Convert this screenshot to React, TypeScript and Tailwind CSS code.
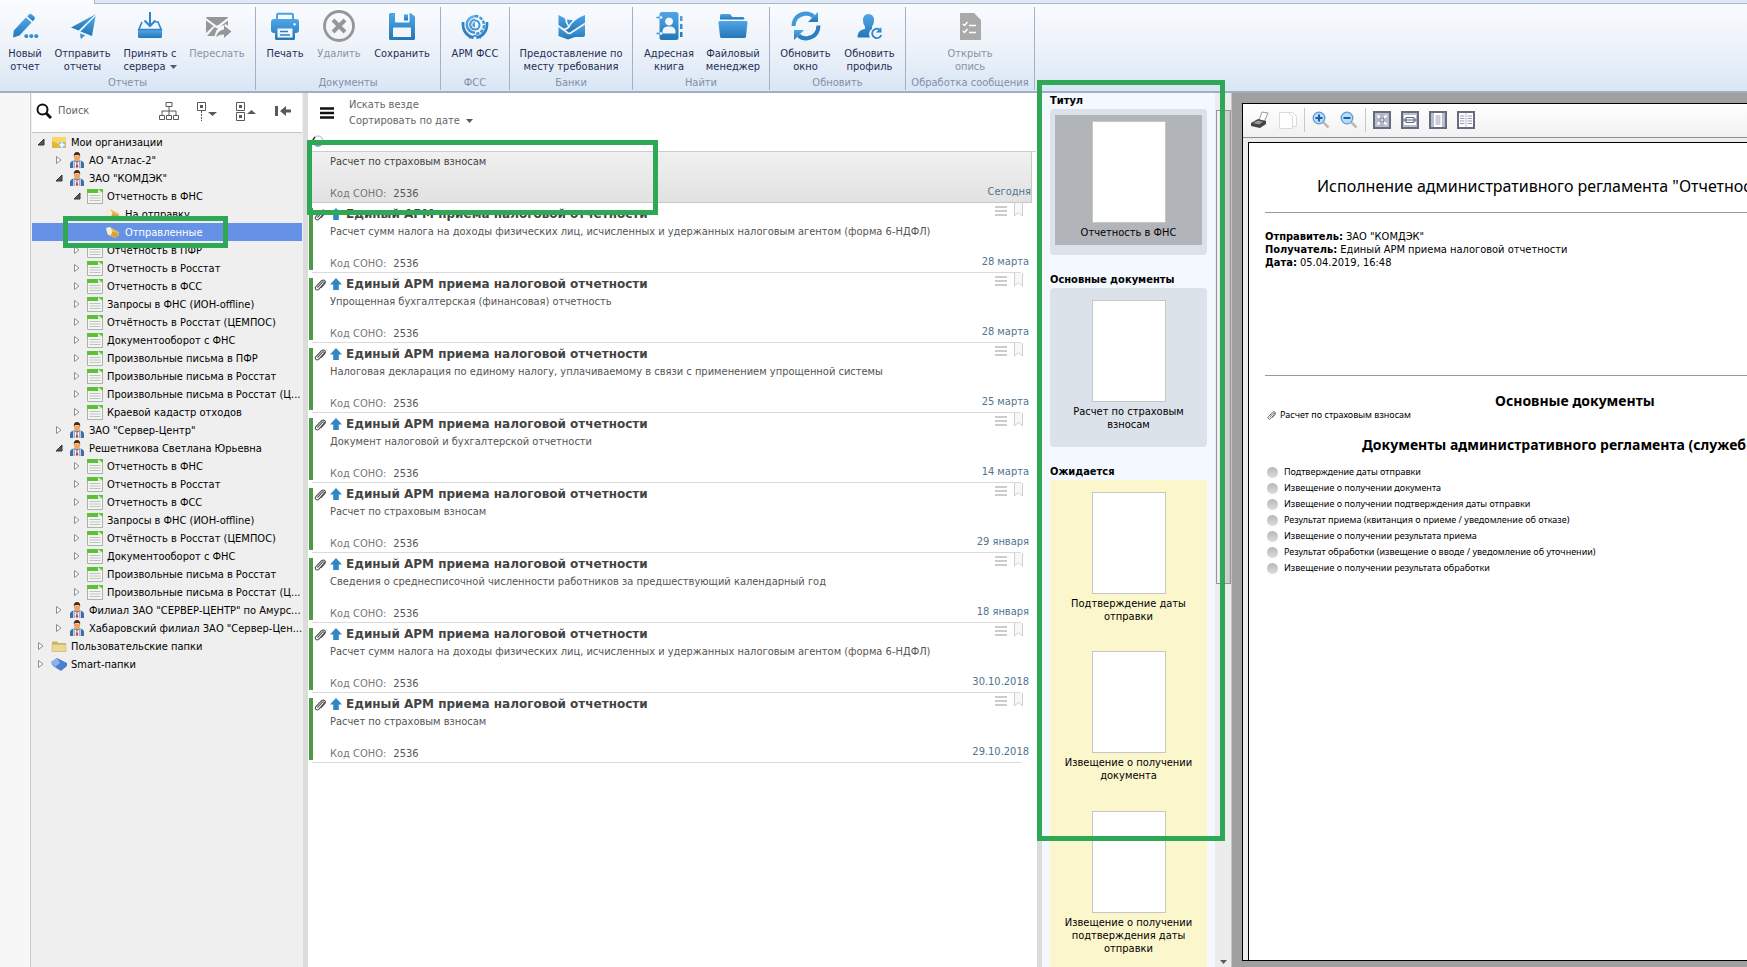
import type { ReactNode } from 'react'

/* ---------- ribbon icons (32x32) ---------- */

function RibbonSvg({ children, gray = false }: { children: ReactNode; gray?: boolean }) {
  return (
    <svg viewBox="0 0 32 32" className="w-8 h-8" fill={gray ? '#969696' : 'url(#ribbonBlue)'} aria-hidden="true">
      {children}
    </svg>
  )
}

const icons = {
  pencil: (
    <RibbonSvg>
      <path d="M4 27.5 4.8 20.5 17 7.5 22.5 12.5 10.5 25.5Z" />
      <path d="M18.2 6.2 20 4.4q1.4-1.1 2.8 0l2.6 2.4q1.2 1.3 0 2.7l-1.7 1.8Z" />
      <circle cx="17.3" cy="26" r="2.1" />
      <circle cx="22.3" cy="26" r="2.1" />
      <circle cx="27.3" cy="26" r="2.1" />
    </RibbonSvg>
  ),
  plane: (
    <RibbonSvg>
      <path d="M29 4 4 17.5l7.6 3Z" />
      <path d="M28.6 6 13.4 21.4 25 26Z" />
      <path d="M13 23.2 13.8 29l4.4-3.8Z" />
    </RibbonSvg>
  ),
  inbox: (
    <RibbonSvg>
      <path d="M4 20h24v6.5q0 1.5-1.500 1.500h-21Q4 28 4 26.500Z" />
      <path d="M8 12 4.800 19.500H27.200L24 12h-2.500" fill="none" stroke="#2b86cb" strokeWidth="1.600" />
      <path d="M16 2v14M10.500 10.500 16 16l5.500-5.500" fill="none" stroke="#2b86cb" strokeWidth="2" />
    </RibbonSvg>
  ),
  forward: (
    <RibbonSvg gray>
      <path d="M6 7h20q1 0 1 .8L17 15.200q-1 .6-2 0L5 8Q5 7 6 7Z" />
      <path d="M5 10.500 12.500 16 5 23ZM27 10.500v5.500l-3-2.500V15q-3 0-5.500 2ZM13.500 17l2 1.200q1 .3 2-.4-3 3-4 8.200H6.200Z" />
      <path d="M23 15.500v4q-6 .5-8 7.500 3-3 8-2.500V28l7.500-6.500Z" />
    </RibbonSvg>
  ),
  printer: (
    <RibbonSvg>
      <path d="M8 9V5q0-1.200 1.200-1.200h13.600Q24 3.800 24 5v4" fill="none" stroke="#4ba0e0" strokeWidth="2" />
      <path
        fillRule="evenodd"
        d="M5 9h22q3 0 3 3v8q0 3-3 3h-1v5.500q0 1.500-1.500 1.500h-17Q6 30 6 28.500V23H5q-3 0-3-3v-8q0-3 3-3Zm3.500 9.500v9h15v-9Zm17-5.500a1.300 1.300 0 1 0 .1 0Z"
      />
      <path d="M11 21.500h8M11 25h10" stroke="#2b80c2" strokeWidth="1.500" />
    </RibbonSvg>
  ),
  cancel: (
    <RibbonSvg gray>
      <circle cx="16" cy="16" r="14.500" fill="none" stroke="#969696" strokeWidth="2.800" />
      <path d="m10 10 12 12M22 10 10 22" stroke="#969696" strokeWidth="4" />
    </RibbonSvg>
  ),
  save: (
    <RibbonSvg>
      <path
        fillRule="evenodd"
        d="M4.500 3H9v8.500q0 1 1 1h12.500q1 0 1-1V3h1L29 6.500v22q0 1.500-1.500 1.500h-23Q3 30 3 28.500v-24Q3 3 4.500 3ZM8 17.500q-1 0-1 1V27h18v-8.500q0-1-1-1Z"
      />
      <path d="M18 4.500h4v6h-4Z" />
    </RibbonSvg>
  ),
  fss: (
    <RibbonSvg>
      <path d="M4 12q-1 12 10.500 16M28 12q1 12-10.500 16" fill="none" stroke="#2d83c6" strokeWidth="2.600" />
      <path d="M16 5a9.500 9.500 0 0 0 0 19Z" opacity="0.85" />
      <path d="M16 8a6.500 6.500 0 0 0 0 13M16 11.500a3 3 0 0 0 0 6.500" fill="none" stroke="#fff" strokeWidth="1" />
      <path d="M16 6a9 9 0 0 1 0 18" fill="none" stroke="#3f97da" strokeWidth="2.400" strokeDasharray="3.500 1.200" />
      <path d="M16 10.500a4.500 4.500 0 0 1 0 9" fill="none" stroke="#3f97da" strokeWidth="2" />
      <path d="m10 28 6-2.500 6 2.500" fill="none" stroke="#2d83c6" strokeWidth="1.500" />
    </RibbonSvg>
  ),
  bank: (
    <RibbonSvg>
      <path d="M3.500 5 10 8.500q.2 4.500 3 8L11.500 17.500Q9.500 19 8 18L3.500 15ZM30 5v7.500L15.500 22q-1.500 1-2.500 0L10.500 20Q13 19 14.500 17.500 18.500 9 30 5ZM12 9.500l6 .8q-2.500 2.200-4 5-1.800-2.500-2-5.800Z" />
      <path d="m3.500 17 8.500 6.500q2 1.500 4 .2L30 14.500V25q0 2-2 2h-8l-7 2.500L3.500 26Z" />
    </RibbonSvg>
  ),
  book: (
    <RibbonSvg>
      <path
        fillRule="evenodd"
        d="M9 2h14q2.500 0 2.500 2.500v23Q25.500 30 23 30H9q-2.500 0-2.500-2.500v-23Q6.500 2 9 2Zm7 5.500a4 4 0 1 0 .1 0ZM9.500 23.500h13q.5-6.500-4.500-7h-4Q9 17 9.500 23.500Z"
      />
      <path d="M27 6h2.500v5H27ZM27 14h2.500v5H27ZM27 22h2.500v5H27Z" />
      <path d="M3.500 7.500h4M3.500 23.500h4" stroke="#3a90d4" strokeWidth="1.600" />
      <circle cx="8" cy="7.500" r="1.300" fill="#fff" />
      <circle cx="8" cy="23.500" r="1.300" fill="#fff" />
    </RibbonSvg>
  ),
  folder: (
    <RibbonSvg>
      <path d="M3 9.500V5.500Q3 4 4.500 4H13l2.500 3H26q1.500 0 1.500 2.500Z" />
      <path d="M2.500 11h27q1.200 0 1 1.500L29 26.500q-.2 1.500-1.700 1.500H4.700Q3.200 28 3 26.500L1.500 12.500q-.2-1.500 1-1.500Z" />
    </RibbonSvg>
  ),
  refresh: (
    <RibbonSvg>
      <path d="M3.500 16Q4 5 15.500 3.500q5 0 8 3" fill="none" stroke="#3f98dc" strokeWidth="4" />
      <path d="M28 2v10H18Z" />
      <path d="M28.500 15.500Q28 27 16.500 28.500q-5 0-8-3" fill="none" stroke="#2a80c2" strokeWidth="4" />
      <path d="M4 30v-10h10Z" />
    </RibbonSvg>
  ),
  profile: (
    <RibbonSvg>
      <path d="M14.500 4q5.500 0 5.500 6.500 0 3.500-2 6v2.300q-3 2-3 5.200 0 2 1 3.500H3.500q0-6 4-7.500l3.500-1.200v-2.300q-2-2.500-2-6Q9 4 14.500 4Z" />
      <path d="M25.500 19.500a4.700 4.700 0 1 0 1.800 5.500" fill="none" stroke="#2d84c8" strokeWidth="1.800" />
      <path d="M27.500 17v5.500h-5.500Z" />
    </RibbonSvg>
  ),
  list: (
    <RibbonSvg gray>
      <path d="M6 3h14l7 7v20H6Z" fill="#a9a9a9" />
      <path d="m9 14 1.500 1.500 3-3.500M9 21l1.500 1.500 3-3.500M15 15.500h7M15 22.500h7" fill="none" stroke="#fff" strokeWidth="1.500" />
    </RibbonSvg>
  ),
}

/* ---------- ribbon ---------- */

function RibbonButton({
  icon,
  lines,
  width,
  disabled = false,
  arrow = false,
}: {
  icon: ReactNode
  lines: string[]
  width: string
  disabled?: boolean
  arrow?: boolean
}) {
  return (
    <button
      disabled={disabled}
      className={`flex flex-col items-center shrink-0 text-[11px] leading-[13px] whitespace-nowrap ${width} ${disabled ? 'text-[#8b93a1]' : 'text-[#1f2f55]'}`}
    >
      {icon}
      <span className="mt-[5px]">{lines[0]}</span>
      {lines[1] && (
        <span className="flex items-center gap-1">
          {lines[1]}
          {arrow && <Caret />}
        </span>
      )}
    </button>
  )
}

function Caret() {
  return (
    <svg viewBox="0 0 7 4" className="w-[7px] h-1" fill="#555b66" aria-hidden="true">
      <path d="M0 0h7L3.500 4Z" />
    </svg>
  )
}

function RibbonGroup({
  title,
  width,
  align = 'justify-center',
  children,
}: {
  title: string
  width: string
  align?: string
  children: ReactNode
}) {
  return (
    <section aria-label={title} className={`flex flex-col justify-between shrink-0 border-r border-[#a3b1c6] ${width}`}>
      <div className={`flex pt-[3px] ${align}`}>{children}</div>
      <div className="text-center text-[11px] leading-[14px] text-[#8190a8] whitespace-nowrap">{title}</div>
    </section>
  )
}

function Ribbon() {
  return (
    <header className="shrink-0 border-b-2 border-[#9fb0c6] bg-linear-to-b from-[#fafcff] via-[#eef3fa] to-[#d9e6f5]">
      <div className="flex h-1">
        <div className="w-[95px] border-r border-[#a9b8cc]" />
        <div className="flex-1 bg-[#dfe8f3] border-b border-[#a9b8cc]" />
      </div>
      <div className="flex h-[87px] pt-[3px] pb-px">
        <RibbonGroup title="Отчеты" width="w-[256px]" align="justify-start">
          <RibbonButton icon={icons.pencil} lines={['Новый', 'отчет']} width="w-[50px]" />
          <RibbonButton icon={icons.plane} lines={['Отправить', 'отчеты']} width="w-[65px]" />
          <RibbonButton icon={icons.inbox} lines={['Принять с', 'сервера']} width="w-[70px]" arrow />
          <RibbonButton icon={icons.forward} lines={['Переслать']} width="w-[64px]" disabled />
        </RibbonGroup>
        <RibbonGroup title="Документы" width="w-[185px]">
          <RibbonButton icon={icons.printer} lines={['Печать']} width="w-[50px]" />
          <RibbonButton icon={icons.cancel} lines={['Удалить']} width="w-[58px]" disabled />
          <RibbonButton icon={icons.save} lines={['Сохранить']} width="w-[68px]" />
        </RibbonGroup>
        <RibbonGroup title="ФСС" width="w-[69px]">
          <RibbonButton icon={icons.fss} lines={['АРМ ФСС']} width="w-[60px]" />
        </RibbonGroup>
        <RibbonGroup title="Банки" width="w-[123px]">
          <RibbonButton icon={icons.bank} lines={['Предоставление по', 'месту требования']} width="w-[114px]" />
        </RibbonGroup>
        <RibbonGroup title="Найти" width="w-[137px]">
          <RibbonButton icon={icons.book} lines={['Адресная', 'книга']} width="w-[64px]" />
          <RibbonButton icon={icons.folder} lines={['Файловый', 'менеджер']} width="w-[64px]" />
        </RibbonGroup>
        <RibbonGroup title="Обновить" width="w-[136px]">
          <RibbonButton icon={icons.refresh} lines={['Обновить', 'окно']} width="w-[64px]" />
          <RibbonButton icon={icons.profile} lines={['Обновить', 'профиль']} width="w-[64px]" />
        </RibbonGroup>
        <RibbonGroup title="Обработка сообщения" width="w-[129px]">
          <RibbonButton icon={icons.list} lines={['Открыть', 'опись']} width="w-[60px]" disabled />
        </RibbonGroup>
      </div>
    </header>
  )
}

/* ---------- tree ---------- */

type NodeKind = 'root' | 'org' | 'report' | 'box' | 'folder' | 'smart'
type TreeNode = { level: 0 | 1 | 2 | 3; kind: NodeKind; label: string; state?: 'open' | 'closed'; selected?: boolean }

const tree: TreeNode[] = [
  { level: 0, kind: 'root', label: 'Мои организации', state: 'open' },
  { level: 1, kind: 'org', label: 'АО "Атлас-2"', state: 'closed' },
  { level: 1, kind: 'org', label: 'ЗАО "КОМДЭК"', state: 'open' },
  { level: 2, kind: 'report', label: 'Отчетность в ФНС', state: 'open' },
  { level: 3, kind: 'box', label: 'На отправку' },
  { level: 3, kind: 'box', label: 'Отправленные', selected: true },
  { level: 2, kind: 'report', label: 'Отчетность в ПФР', state: 'closed' },
  { level: 2, kind: 'report', label: 'Отчетность в Росстат', state: 'closed' },
  { level: 2, kind: 'report', label: 'Отчетность в ФСС', state: 'closed' },
  { level: 2, kind: 'report', label: 'Запросы в ФНС (ИОН-offline)', state: 'closed' },
  { level: 2, kind: 'report', label: 'Отчётность в Росстат (ЦЕМПОС)', state: 'closed' },
  { level: 2, kind: 'report', label: 'Документооборот с ФНС', state: 'closed' },
  { level: 2, kind: 'report', label: 'Произвольные письма в ПФР', state: 'closed' },
  { level: 2, kind: 'report', label: 'Произвольные письма в Росстат', state: 'closed' },
  { level: 2, kind: 'report', label: 'Произвольные письма в Росстат (Ц...', state: 'closed' },
  { level: 2, kind: 'report', label: 'Краевой кадастр отходов', state: 'closed' },
  { level: 1, kind: 'org', label: 'ЗАО "Сервер-Центр"', state: 'closed' },
  { level: 1, kind: 'org', label: 'Решетникова Светлана Юрьевна', state: 'open' },
  { level: 2, kind: 'report', label: 'Отчетность в ФНС', state: 'closed' },
  { level: 2, kind: 'report', label: 'Отчетность в Росстат', state: 'closed' },
  { level: 2, kind: 'report', label: 'Отчетность в ФСС', state: 'closed' },
  { level: 2, kind: 'report', label: 'Запросы в ФНС (ИОН-offline)', state: 'closed' },
  { level: 2, kind: 'report', label: 'Отчётность в Росстат (ЦЕМПОС)', state: 'closed' },
  { level: 2, kind: 'report', label: 'Документооборот с ФНС', state: 'closed' },
  { level: 2, kind: 'report', label: 'Произвольные письма в Росстат', state: 'closed' },
  { level: 2, kind: 'report', label: 'Произвольные письма в Росстат (Ц...', state: 'closed' },
  { level: 1, kind: 'org', label: 'Филиал ЗАО "СЕРВЕР-ЦЕНТР" по Амурс...', state: 'closed' },
  { level: 1, kind: 'org', label: 'Хабаровский филиал ЗАО "Сервер-Цен...', state: 'closed' },
  { level: 0, kind: 'folder', label: 'Пользовательские папки', state: 'closed' },
  { level: 0, kind: 'smart', label: 'Smart-папки', state: 'closed' },
]

const indent = ['pl-1', 'pl-[22px]', 'pl-[40px]', 'pl-[58px]']

function NodeIcon({ kind }: { kind: NodeKind }) {
  return (
    <svg viewBox="0 0 16 16" className="w-4 h-4 shrink-0" aria-hidden="true">
      {kind === 'root' && (
        <>
          <path d="M1 3h14v11H1Z" fill="#e9b829" />
          <path d="M1 3h14v5L8 10 1 7Z" fill="#f6d866" />
          <path d="M8 8h6v6H8Z" fill="#9cc0e8" />
          <path d="M11 8.500v5M8.500 11h5" stroke="#fff" strokeWidth="1.500" />
        </>
      )}
      {kind === 'org' && (
        <>
          <path d="M1 16v-4q0-3 4-3.500h6q4 .5 4 3.500v4Z" fill="#3f6ea5" />
          <path d="M4.500 9v7M11.500 9v7" stroke="#b9cfe8" />
          <path d="m5.500 9 2.500 2 2.500-2v7h-5Z" fill="#f1f4f8" />
          <path d="m8 10 1.300 5L8 16l-1.300-1Z" fill="#d33a2c" />
          <path d="M5 3.500h6V6q-.5 3.500-3 3.500T5 6Z" fill="#f0a463" />
          <path d="M4.800 4.500Q4.500 0 8 0t3.200 4.500L10 3H6Z" fill="#4a2a18" />
        </>
      )}
      {kind === 'report' && (
        <>
          <path d="M.5 1.500h15v14H.5Z" fill="#f3f5f3" stroke="#a9b3a9" />
          <path d="M0 1h16v4H0Z" fill="#5cc038" />
          <path d="m11 1 5 4h-5Z" fill="#d6efcb" />
          <path d="M2.500 7.500h11M2.500 10h11M2.500 12.500h11" stroke="#c0c4c0" />
        </>
      )}
      {kind === 'box' && (
        <>
          <path d="M1 4.500 5 3l9 5v3l-4 3L3 11Z" fill="#e3bd55" />
          <path d="M1 4 5 3l2.500 4L6 11.500 2.500 10Z" fill="#f4efd6" />
          <path d="m6 11.500 1.500-4L14 9.500 10 14Z" fill="#d3a437" />
        </>
      )}
      {kind === 'folder' && (
        <>
          <path d="M1 3.500h5l1 1.500h8v8.500H1Z" fill="#c9b266" />
          <path d="M1 6.500h14v7H1Z" fill="#ead994" stroke="#cdb96f" strokeWidth=".6" />
        </>
      )}
      {kind === 'smart' && (
        <>
          <path d="m0 6 6-4 10 5v3l-6 5L2 10Z" fill="#4c80cf" />
          <path d="m0 6 6-4 3 5-5 4Z" fill="#8cb4ec" />
        </>
      )}
    </svg>
  )
}

function Twisty({ state }: { state?: 'open' | 'closed' }) {
  return (
    <svg viewBox="0 0 10 10" className="w-[10px] h-[10px] shrink-0" aria-hidden="true">
      {state === 'open' && <path d="M8 2v6H2Z" fill="#595959" stroke="#333" />}
      {state === 'closed' && <path d="M2.500 1.500v7L7 5Z" fill="#fff" stroke="#8d8d8d" />}
    </svg>
  )
}

function Sidebar() {
  return (
    <aside className="w-[273px] shrink-0 flex flex-col border-l border-[#c9c9c9] bg-[#efefef] pl-px pr-px">
      <div className="flex items-center h-10 shrink-0 bg-white border-b border-[#c4c4c4] pl-1 pr-2 pb-[3px]">
        <svg viewBox="0 0 16 16" className="w-4 h-4 shrink-0" fill="none" stroke="#111" aria-hidden="true">
          <circle cx="6.500" cy="6.500" r="5" strokeWidth="2" />
          <path d="m10 10 5 5" strokeWidth="3" />
        </svg>
        <input
          aria-label="Поиск"
          placeholder="Поиск"
          className="w-[107px] pl-[6px] text-[11px] bg-transparent outline-none placeholder:text-[#666]"
        />
        <div className="flex-1 flex items-center justify-between pr-0.5 text-[#595959]">
          <button aria-label="Структура">
            <svg viewBox="0 0 20 20" className="w-5 h-5" fill="none" stroke="currentColor" aria-hidden="true">
              <path d="M7 1.500h6v4H7ZM.5 14.500h5v4h-5ZM7.500 14.500h5v4h-5ZM14.500 14.500h5v4h-5Z" />
              <path d="M10 6v8M3 14v-4h14v4" />
            </svg>
          </button>
          <button aria-label="Развернуть">
            <svg viewBox="0 0 20 20" className="w-5 h-5" fill="none" stroke="currentColor" aria-hidden="true">
              <path d="M.5 1.500h8v8h-8Z" />
              <path d="M3 4h3v3H3ZM11 11h9l-4.500 4Z" fill="currentColor" stroke="none" />
              <path d="M4.500 10v10" strokeDasharray="2 1" />
            </svg>
          </button>
          <button aria-label="Свернуть">
            <svg viewBox="0 0 20 20" className="w-5 h-5" fill="none" stroke="currentColor" aria-hidden="true">
              <path d="M.5 1.500h8v8h-8ZM.5 11.500h8v8h-8Z" />
              <path d="M3 4h3v3H3ZM3 14h3v3H3ZM11 13h9l-4.500-4Z" fill="currentColor" stroke="none" />
            </svg>
          </button>
          <button aria-label="Скрыть панель">
            <svg viewBox="0 0 18 12" className="w-[18px] h-3" fill="currentColor" aria-hidden="true">
              <path d="M1 1h3v10H1ZM6 6l6-5v3.500h5v3h-5V11Z" />
            </svg>
          </button>
        </div>
      </div>
      <nav aria-label="Организации">
        <ul>
          {tree.map((n, i) => (
            <li key={i}>
              <button
                className={`flex items-center w-full h-[18px] text-[11px] leading-4 whitespace-nowrap ${indent[n.level]} ${n.selected ? 'bg-[#6592e6] text-white' : 'text-black'}`}
              >
                <Twisty state={n.state} />
                <span className="ml-[5px] mr-1 flex">
                  <NodeIcon kind={n.kind} />
                </span>
                <span className="pt-px">{n.label}</span>
              </button>
            </li>
          ))}
        </ul>
      </nav>
    </aside>
  )
}

/* ---------- message list ---------- */

const sender = 'Единый АРМ приема налоговой отчетности'

const messages = [
  { text: 'Расчет сумм налога на доходы физических лиц, исчисленных и удержанных налоговым агентом (форма 6-НДФЛ)', date: '28 марта' },
  { text: 'Упрощенная бухгалтерская (финансовая) отчетность', date: '28 марта' },
  { text: 'Налоговая декларация по единому налогу, уплачиваемому в связи с применением упрощенной системы', date: '25 марта' },
  { text: 'Документ налоговой и бухгалтерской отчетности', date: '14 марта' },
  { text: 'Расчет по страховым взносам', date: '29 января' },
  { text: 'Сведения о среднесписочной численности работников за предшествующий календарный год', date: '18 января' },
  { text: 'Расчет сумм налога на доходы физических лиц, исчисленных и удержанных налоговым агентом (форма 6-НДФЛ)', date: '30.10.2018' },
  { text: 'Расчет по страховым взносам', date: '29.10.2018' },
]

function Clip({ className }: { className: string }) {
  return (
    <svg viewBox="0 0 14 14" className={className} fill="none" stroke="#4a4a4a" strokeWidth="1.200" aria-hidden="true">
      <path d="m4 10 6-6.500q1-.8 1.600 0 .7.700 0 1.600L5.500 12q-1.700 1.500-3.300 0-1.500-1.500 0-3.200L8.800 2Q11 .3 12.700 2q1.300 1.700-.2 3.500L8 10.500" />
    </svg>
  )
}

function CodeLine({ date }: { date: string }) {
  return (
    <div className="flex items-start justify-between">
      <span className="flex gap-[7px] pt-[2px] text-[#555]">
        <span className="text-[#777]">Код СОНО:</span>2536
      </span>
      <time className="text-[#4f7490]">{date}</time>
    </div>
  )
}

function MessageRow({ text, date }: { text: string; date: string }) {
  return (
    <li className="relative flex h-[70px] pr-2 text-[11px] leading-[14px]">
      <div className="w-1 ml-px mt-[5px] mb-[3px] shrink-0 bg-[#4f9a44]" />
      <div className="w-[17px] pt-[6px] pl-px shrink-0">
        <Clip className="w-3 h-3" />
      </div>
      <div className="flex-1 min-w-0 flex flex-col">
        <div className="flex items-center h-[22px]">
          <svg viewBox="0 0 12 12" className="w-3 h-3 shrink-0" fill="#2f87c6" aria-hidden="true">
            <path d="M6 0 12 6.500H8.800V12H3.200V6.500H0Z" />
          </svg>
          <h3 className="flex-1 ml-1 font-['DejaVu_Sans'] font-bold text-[12px] text-[#444] whitespace-nowrap">{sender}</h3>
          <div className="flex items-start self-start gap-[7px] pr-[6px]">
            <svg viewBox="0 0 12 12" className="w-3 h-3 mt-0.5" stroke="#ccc" strokeWidth="2" aria-hidden="true">
              <path d="M0 2h12M0 6h12M0 10h12" />
            </svg>
            <svg viewBox="0 0 9 14" className="w-[9px] h-[14px]" fill="#f7f7f7" stroke="#cfcfcf" aria-hidden="true">
              <path d="M.5 0v13L4.500 9.500l4 3.500V0" />
            </svg>
          </div>
        </div>
        <p className="text-[#555] whitespace-nowrap">{text}</p>
        <div className="mt-4">
          <CodeLine date={date} />
        </div>
      </div>
      <div className="absolute left-1 right-4 bottom-0 border-b border-[#dadada]" />
    </li>
  )
}

function MessageList() {
  return (
    <main className="flex-1 min-w-0 flex flex-col bg-white">
      <div className="flex items-center gap-[15px] h-[42px] pl-3 pb-[3px]">
        <button aria-label="Меню">
          <svg viewBox="0 0 14 12" className="w-[14px] h-3" stroke="#111" strokeWidth="2.500" aria-hidden="true">
            <path d="M0 1.500h14M0 6h14M0 10.500h14" />
          </svg>
        </button>
        <div className="flex flex-col items-start text-[11px] leading-4 text-[#666]">
          <button>Искать везде</button>
          <button className="flex items-center gap-1.5">
            Сортировать по дате
            <Caret />
          </button>
        </div>
      </div>
      <div className="h-4 pl-1">
        <svg viewBox="0 0 12 12" className="w-3 h-3" fill="none" strokeWidth="1.500" aria-hidden="true">
          <circle cx="6" cy="6" r="5" stroke="#c9ced3" />
          <path d="M3 2Q0 5 1.500 8" stroke="#333" />
          <path d="M3 10q3 2 6 0" stroke="#6b8fb5" />
        </svg>
      </div>
      <div className="border-t border-[#c9cfc9] mr-px">
        <div className="h-[51px] mr-1 pl-[22px] pt-[3px] text-[11px] leading-[14px] border-r border-b border-[#c8c8c8] bg-linear-to-b from-[#f0f0f0] to-[#e2e2e2]">
          <p className="text-[#444]">Расчет по страховым взносам</p>
          <div className="mt-4">
            <CodeLine date="Сегодня" />
          </div>
        </div>
      </div>
      <ul>
        {messages.map((m, i) => (
          <MessageRow key={i} {...m} />
        ))}
      </ul>
    </main>
  )
}

/* ---------- document thumbnails ---------- */

function Thumb({ caption, className = '' }: { caption: string[]; className?: string }) {
  return (
    <button className={`flex flex-col items-center w-full text-[11px] leading-[13px] text-black ${className}`}>
      <span className="block w-[74px] h-[102px] bg-white border border-[#c5c8c0]" />
      <span className="block mt-[3px]">
        {caption.map((c) => (
          <span key={c} className="block whitespace-nowrap">
            {c}
          </span>
        ))}
      </span>
    </button>
  )
}

function Thumbnails() {
  return (
    <section aria-label="Документы" className="w-[194px] shrink-0 flex border-l-[5px] border-[#dcdcdc] bg-[#f4f8ff] overflow-hidden">
      <div className="flex-1 px-2 h-full overflow-hidden">
        <h2 className="h-4 text-[11px] leading-[15px] font-bold">Титул</h2>
        <div className="rounded bg-[#dbe2ea] h-[146px] px-[5px] pt-[6px]">
          <div className="bg-[#b1b4b8] h-[130px] pt-[6px]">
            <Thumb caption={['Отчетность в ФНС']} />
          </div>
        </div>
        <h2 className="h-[33px] pt-[17px] text-[11px] leading-[15px] font-bold whitespace-nowrap">Основные документы</h2>
        <div className="rounded bg-[#dbe2ea] h-[159px] pt-3">
          <Thumb caption={['Расчет по страховым', 'взносам']} />
        </div>
        <h2 className="h-[33px] pt-[17px] text-[11px] leading-[15px] font-bold">Ожидается</h2>
        <div className="bg-[#fbf6cb] pt-3 h-[600px]">
          <Thumb className="h-[159px]" caption={['Подтверждение даты', 'отправки']} />
          <Thumb className="h-[160px]" caption={['Извещение о получении', 'документа']} />
          <Thumb caption={['Извещение о получении', 'подтверждения даты', 'отправки']} />
        </div>
      </div>
      <div className="w-4 shrink-0 bg-[#ececec] flex flex-col items-center justify-between pt-[17px] pb-[3px]">
        <div className="w-[15px] h-[474px] border border-[#959595] bg-linear-to-r from-[#f3f3f3] to-[#c4c4c4]" />
        <Caret />
      </div>
    </section>
  )
}

/* ---------- viewer ---------- */

const expected = [
  'Подтверждение даты отправки',
  'Извещение о получении документа',
  'Извещение о получении подтверждения даты отправки',
  'Результат приема (квитанция о приеме / уведомление об отказе)',
  'Извещение о получении результата приема',
  'Результат обработки (извещение о вводе / уведомление об уточнении)',
  'Извещение о получении результата обработки',
]

function Magnifier({ label, plus = false }: { label: string; plus?: boolean }) {
  return (
    <button aria-label={label}>
      <svg viewBox="0 0 18 18" className="w-[18px] h-[18px]" aria-hidden="true">
        <path d="m11.500 11.500 5 5" stroke="#c3b8b0" strokeWidth="2.500" />
        <circle cx="7" cy="7" r="5.800" fill="#b9dcf7" stroke="#5b9bd8" strokeWidth="1.300" />
        <path d={plus ? 'M3.500 7h7M7 3.500v7' : 'M3.500 7h7'} stroke="#1d5ea8" strokeWidth="2" />
      </svg>
    </button>
  )
}

function ViewButton({ label, children }: { label: string; children: ReactNode }) {
  return (
    <button aria-label={label}>
      <svg viewBox="0 0 18 18" className="w-[18px] h-[18px]" fill="none" stroke="#666c7c" aria-hidden="true">
        <path d="M1 1h16v16H1Z" fill="#b9bdd2" strokeWidth="2" />
        {children}
      </svg>
    </button>
  )
}

function ViewerToolbar() {
  return (
    <div className="flex items-center gap-[10px] h-[34px] pl-[8px] pb-[2px] shrink-0 bg-linear-to-b from-white to-[#f1f1f3] border-b border-[#8f8f8f]">
      <button aria-label="Печать">
        <svg viewBox="0 0 18 18" className="w-[18px] h-[18px]" aria-hidden="true">
          <path d="M8 9 11 1l6 1-4 9Z" fill="#fff" stroke="#999" />
          <path d="m0 12 7-4 8 2v3l-6 4-9-2Z" fill="#444" />
          <path d="m2 12 5-2.500 5 1.200-4 2.800Z" fill="#999" />
        </svg>
      </button>
      <button aria-label="Копировать">
        <svg viewBox="0 0 18 18" className="w-[18px] h-[18px]" fill="#fff" stroke="#e0d9da" aria-hidden="true">
          <path d="M5.500 1.500h8l4 4v10h-12Z" />
          <path d="M.5 1.500h9l4 4v12H.5Z" />
        </svg>
      </button>
      <div className="flex items-center gap-[10px] h-6 border-l border-r border-[#c9c9c9] px-[7px] -mx-[3px]">
        <Magnifier label="Увеличить" plus />
        <Magnifier label="Уменьшить" />
      </div>
      <ViewButton label="Страница целиком">
        <path d="M9 3v12M3 9h12M4.500 4.500l9 9M13.500 4.500l-9 9" stroke="#fff" strokeWidth="2" />
        <path d="M9 3v3M9 12v3M3 9h3M12 9h3" />
        <path d="M7 7h4v4H7Z" fill="#d5d8e4" />
      </ViewButton>
      <ViewButton label="По ширине">
        <path d="M3 4h12v3H3ZM3 11h12v3H3Z" fill="#fff" stroke="none" />
        <path d="M5 6.500h8v5H5ZM5 9h8M2 9h3M13 9h3" fill="#eef" />
      </ViewButton>
      <ViewButton label="Одна страница">
        <path d="M5 2h8v14H5Z" fill="#fff" stroke="none" />
        <path d="M6.500 5h5M6.500 7h5M6.500 9h5M6.500 11h5M6.500 13h5" stroke="#9a9fb0" />
      </ViewButton>
      <ViewButton label="Две страницы">
        <path d="M2 2h6.500v14H2ZM9.500 2H16v14H9.500Z" fill="#fff" stroke="none" />
        <path d="M3 5h4.500M3 7.500h4.500M3 10h4.500M3 12.500h4.500M10.500 5H15M10.500 7.500H15M10.500 10H15M10.500 12.500H15" stroke="#9a9fb0" />
      </ViewButton>
    </div>
  )
}

function Viewer() {
  return (
    <section aria-label="Просмотр" className="w-[516px] shrink-0 bg-[#a0a0a0] pl-[10px] pt-[10px] pb-[6px] flex border-l border-[#c5c5c5]">
      <div className="flex-1 min-w-0 flex flex-col border border-r-0 border-black bg-[#ececec]">
        <ViewerToolbar />
        <article className="flex-1 mt-1 ml-[5px] border border-r-0 border-b-0 border-black bg-white pl-4 overflow-hidden text-black whitespace-nowrap font-['Noto_Sans',sans-serif]">
          <h1 className="h-[70px] pt-[31px] pl-[52px] text-[16px] leading-6 border-b border-[#999]">
            Исполнение административного регламента "Отчетность в ФНС"
          </h1>
          <div className="h-[163px] pt-[17px] text-[11px] leading-[13px] border-b border-[#999] font-['DejaVu_Sans_Condensed','Noto_Sans',sans-serif]">
            <p><b>Отправитель:</b> ЗАО "КОМДЭК"</p>
            <p><b>Получатель:</b> Единый АРМ приема налоговой отчетности</p>
            <p><b>Дата:</b> 05.04.2019, 16:48</p>
          </div>
          <h2 className="pt-[17px] pl-[230px] text-[14px] leading-4 font-bold">Основные документы</h2>
          <a href="#doc" className="flex items-center gap-1 pl-[2px] text-[9px] leading-3">
            <Clip className="w-[9px] h-[9px]" />
            Расчет по страховым взносам
          </a>
          <h2 className="pt-4 pl-[97px] text-[14px] leading-4 font-bold">
            Документы административного регламента (служебные)
          </h2>
          <ul className="pt-[11px] pl-[2px] text-[9px]">
            {expected.map((e) => (
              <li key={e} className="flex items-center gap-[6px] h-4">
                <span className="w-[11px] h-[11px] rounded-full bg-linear-to-b from-[#b5b5b5] to-[#dedede]" />
                {e}
              </li>
            ))}
          </ul>
        </article>
      </div>
    </section>
  )
}

/* ---------- page ---------- */

export default function App() {
  return (
    <div className="relative h-screen flex flex-col overflow-hidden bg-[#f7f7f7] font-['DejaVu_Sans_Condensed','Noto_Sans',sans-serif]">
      <svg className="absolute w-0 h-0" aria-hidden="true">
        <defs>
          <linearGradient id="ribbonBlue" x1="0" y1="0" x2="0" y2="1">
            <stop offset="0" stopColor="#4fa6e8" />
            <stop offset="1" stopColor="#2477b5" />
          </linearGradient>
        </defs>
      </svg>
      <Ribbon />
      <div className="flex-1 min-h-0 flex">
        <div className="w-[30px] shrink-0 bg-[#f7f7f7]" />
        <Sidebar />
        <div className="w-[5px] shrink-0 bg-[#dcdcdc]" />
        <MessageList />
        <Thumbnails />
        <Viewer />
      </div>

      {/* highlight frames */}
      <div className="absolute left-[63px] top-[216px] w-[165px] h-[32px] border-5 border-[#2fa855]" />
      <div className="absolute left-[307px] top-[140px] w-[351px] h-[75px] border-5 border-[#2fa855]" />
      <div className="absolute left-[1037px] top-[80px] w-[188px] h-[761px] border-5 border-[#2fa855]" />
    </div>
  )
}
